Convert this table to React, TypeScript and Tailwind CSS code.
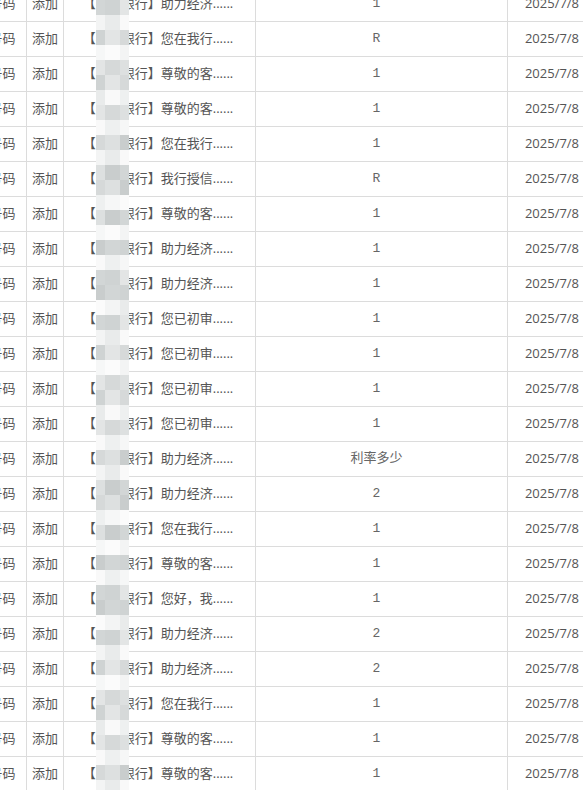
import React from "react";

type Row = { msg: string; reply: string };

const ROWS: Row[] = [
  { msg: "助力经济", reply: "1" },
  { msg: "您在我行", reply: "R" },
  { msg: "尊敬的客", reply: "1" },
  { msg: "尊敬的客", reply: "1" },
  { msg: "您在我行", reply: "1" },
  { msg: "我行授信", reply: "R" },
  { msg: "尊敬的客", reply: "1" },
  { msg: "助力经济", reply: "1" },
  { msg: "助力经济", reply: "1" },
  { msg: "您已初审", reply: "1" },
  { msg: "您已初审", reply: "1" },
  { msg: "您已初审", reply: "1" },
  { msg: "您已初审", reply: "1" },
  { msg: "助力经济", reply: "利率多少" },
  { msg: "助力经济", reply: "2" },
  { msg: "您在我行", reply: "1" },
  { msg: "尊敬的客", reply: "1" },
  { msg: "您好，我", reply: "1" },
  { msg: "助力经济", reply: "2" },
  { msg: "助力经济", reply: "2" },
  { msg: "您在我行", reply: "1" },
  { msg: "尊敬的客", reply: "1" },
  { msg: "尊敬的客", reply: "1" },
  { msg: "您在我行", reply: "1" },
];

const DARK = ["#d2d6d6", "#c9cdcd", "#dde0e0", "#d6d9d9", "#e3e5e5", "#cfd3d3"];
const LIGHT = ["#f6f7f7", "#eef0f0", "#f9f9f9", "#e9ebeb", "#f3f4f4", "#fbfbfb"];

// redaction mosaic over the bank name
function Mosaic() {
  const cells = [];
  for (let j = 0; j < 54; j++) {
    const mid = j * 15 + 7.5;
    const k = Math.round((mid - 4) / 35);
    const near = Math.abs(mid - (4 + 35 * k)) < 9;
    const pal = near ? DARK : LIGHT;
    const row = [0, 1, 2].map((c) => pal[(j * 7 + c * 5 + k * 3) % pal.length]);
    cells.push(row);
  }
  return (
    <div className="absolute left-[96px] top-0 w-[33px] flex flex-col">
      {cells.map((row, j) => (
        <div key={j} className="flex h-[15px]">
          <div className="w-[9px]" style={{ backgroundColor: row[0] }} />
          <div className="w-[15px]" style={{ backgroundColor: row[1] }} />
          <div className="w-[9px]" style={{ backgroundColor: row[2] }} />
        </div>
      ))}
    </div>
  );
}

export default function App() {
  return (
    <div
      className="relative w-[583px] h-[790px] overflow-hidden bg-white text-[13px] text-[#555]"
      style={{ fontFamily: '"Open Sans", "Noto Sans CJK SC", sans-serif' }}
    >
      <div className="mt-[-13px] ml-[-22px] w-[700px]">
        {ROWS.map((row, i) => (
          <div key={i} className="flex h-[35px] border-b border-[#dcdcdc]">
            <div className="w-[49px] shrink-0 flex items-center justify-center pl-[1px] border-r border-[#dcdcdc]">
              号码
            </div>
            <div className="w-[37px] shrink-0 flex items-center justify-center border-r border-[#dcdcdc]">
              添加
            </div>
            <div className="w-[192px] shrink-0 flex items-center justify-center pr-[3px] border-r border-[#dcdcdc] whitespace-nowrap">
              【某某银行】{row.msg}......
            </div>
            <div
              className="w-[252px] shrink-0 flex items-center justify-center pr-[10px] border-r border-[#dcdcdc] text-[#666]"
              style={{ fontFamily: '"Liberation Mono", "Noto Sans CJK SC", monospace' }}
            >
              {row.reply}
            </div>
            <div className="w-[91px] shrink-0 flex items-center justify-center pr-[3px]">
              2025/7/8
            </div>
          </div>
        ))}
      </div>
      <Mosaic />
    </div>
  );
}
